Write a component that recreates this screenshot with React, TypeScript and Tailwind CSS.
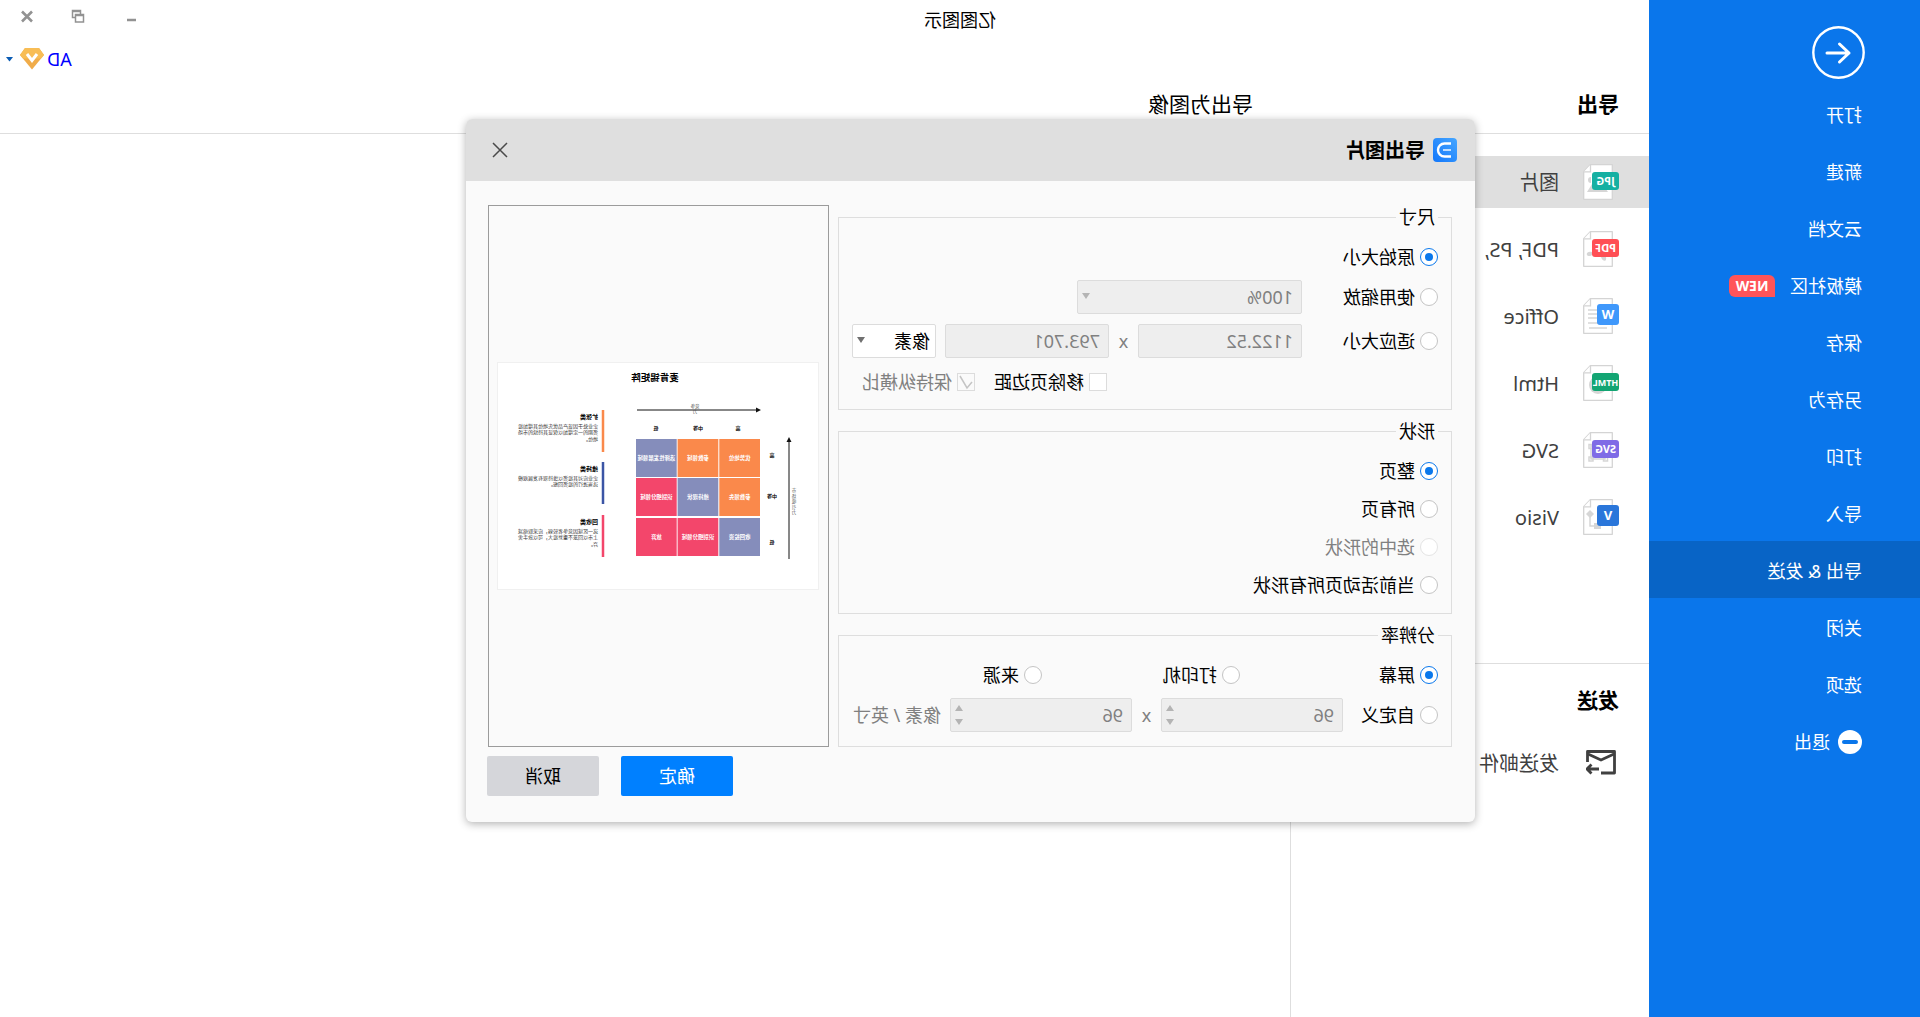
import React from 'react';
import clsx from 'clsx';

const MENU = ['打开', '新建', '云文档', '模板社区', '保存', '另存为', '打印', '导入', '导出 & 发送', '关闭', '选项'];

const FORMATS = [
  { name: '图片', tag: 'JPG', color: '#15b0a2' },
  { name: 'PDF, PS,', tag: 'PDF', color: '#ff4f55' },
  { name: 'Office', tag: 'W', color: '#3f98fb' },
  { name: 'Html', tag: 'HTML', color: '#13a573' },
  { name: 'SVG', tag: 'SVG', color: '#7f6be6' },
  { name: 'Visio', tag: 'V', color: '#2a76da' },
];

const ORANGE = '#fa894b';
const VIOLET = '#858dbb';
const PINK = '#f3466b';

const CELLS = [
  { text: '优势地位', x: 60, y: 77, fill: ORANGE },
  { text: '参数领域', x: 101.7, y: 77, fill: ORANGE },
  { text: '选择性发展领域', x: 143.3, y: 77, fill: VIOLET },
  { text: '参数领先', x: 60, y: 116, fill: ORANGE },
  { text: '维持现状', x: 101.7, y: 116, fill: VIOLET },
  { text: '识别细分领域', x: 143.3, y: 116, fill: PINK },
  { text: '收回投资', x: 60, y: 156, fill: VIOLET },
  { text: '识别细分领域', x: 101.7, y: 156, fill: PINK },
  { text: '放弃', x: 143.3, y: 156, fill: PINK },
];

const NOTES = [
  {
    title: '扩张类',
    y: 48,
    color: ORANGE,
    lines: ['企业处于因该产品优先地位其增加投', '资期的一定增加以保证其持续的市场', '地位。'],
  },
  { title: '维持类', y: 100, color: '#3b55a5', lines: ['企业应对其投资以维持现有发展规模', '适当进行的投资回报。'] },
  {
    title: '回收类',
    y: 153,
    color: PINK,
    lines: ['这一区域因竞争者较弱，应采取缩减', '上市以回笼不重复投大，可以放手舍', '弃。'],
  },
];

const Glyph = ({ tag }: { tag: string }) => {
  switch (tag) {
    case 'JPG':
      return <path d="M11 28l7-10 5 6 4-4 5 8zM28 13a3 3 0 1 1 0 6z" fill="#d6d6d6" />;
    case 'PDF':
      return <path d="M13 26c3-6 6-4 5 0s-6 6-5 0zM27 21c4-1 6 1 5 3s-5 1-6-1z" fill="#d6d6d6" />;
    case 'W':
      return <path d="M12 12h19M12 16h19M12 20h19M12 25h19M12 30h18" stroke="#d6d6d6" strokeWidth="1.4" />;
    case 'HTML':
      return <circle cx="21" cy="20" r="9" fill="#d6d6d6" />;
    case 'SVG':
      return (
        <path
          d="M14 14h14v13H14zM11.500 25h4v4h-4zM26 25h4v4h-4zM26 12.500h4v4h-4z"
          fill="none"
          stroke="#d6d6d6"
          strokeWidth="1.500"
        />
      );
    default:
      return (
        <>
          <path d="M29 11l4 4-4 4-4-4z M18 24h7v6h-7z" fill="#d6d6d6" />
          <path d="M29 15v12h-8" fill="none" stroke="#d6d6d6" strokeWidth="1.500" />
        </>
      );
  }
};

const FormatIcon = ({ tag, color }: { tag: string; color: string }) => {
  const single = tag.length === 1;
  return (
    <svg width="36" height="36" viewBox="0 0 36 36">
      <path d="M6.700.7h22l6.600 7v27.600H6.700z" fill="#fff" stroke="#d4d4d4" strokeWidth="1.300" strokeLinejoin="round" />
      <Glyph tag={tag} />
      <path d="M28.500.7v7.200h6.800" fill="#fff" stroke="#d4d4d4" strokeWidth="1.300" />
      {single ? (
        <rect y="6" width="22" height="21" rx="3" fill={color} />
      ) : (
        <rect y="8" width="27" height="18" rx="3" fill={color} />
      )}
      <text
        x={single ? 11 : 13.5}
        y="21"
        textAnchor="middle"
        fill="#fff"
        fontWeight="700"
        fontSize={single ? 13 : tag === 'HTML' ? 9 : 11}
      >
        {tag}
      </text>
    </svg>
  );
};

const MailIcon = () => (
  <svg width="30" height="26" viewBox="0 0 30 26" fill="none" stroke="#404040" strokeWidth="2.800">
    <path d="M15 23H1.500V1.500h27V12" strokeLinejoin="round" />
    <path d="M2 4l13 6 13-6" />
    <path d="M17 19h12M24.500 14.500L29 19l-4.500 4.500" />
  </svg>
);

const Caret = ({ className, up }: { className?: string; up?: boolean }) => (
  <svg width="10" height="7" viewBox="0 0 10 7" className={className}>
    <path d={up ? 'M1 7h8L5 1z' : 'M1 0h8L5 6z'} fill="currentColor" />
  </svg>
);

const Radio = ({
  name,
  label,
  checked,
  disabled,
  className,
}: {
  name: string;
  label: string;
  checked?: boolean;
  disabled?: boolean;
  className?: string;
}) => (
  <label className={clsx('flex items-center gap-[5px]', disabled && 'text-[#808080]', className)}>
    <input
      type="radio"
      name={name}
      defaultChecked={checked}
      disabled={disabled}
      className="grid size-[18px] shrink-0 appearance-none place-items-center rounded-full border border-[#c4c4c4] bg-white before:size-2 before:rounded-full checked:border-[#0a78ec] checked:before:bg-[#0a78ec] disabled:border-[#e4e4e4]"
    />
    {label}
  </label>
);

const Check = ({ label, checked, disabled }: { label: string; checked?: boolean; disabled?: boolean }) => (
  <label className={clsx('relative flex items-center gap-[5px]', disabled && 'text-[#808080]')}>
    <input
      type="checkbox"
      defaultChecked={checked}
      disabled={disabled}
      className="size-[18px] shrink-0 appearance-none border border-[#dcdcdc] bg-white disabled:bg-[#fafafa]"
    />
    {checked && (
      <svg width="18" height="18" viewBox="0 0 18 18" className="absolute left-0">
        <path d="M3 9l5 6 7-12" fill="none" stroke="#c4c4c4" strokeWidth="1.500" />
      </svg>
    )}
    {label}
  </label>
);

const Field = ({ label, value, className }: { label: string; value: string; className: string }) => (
  <input
    type="text"
    aria-label={label}
    defaultValue={value}
    disabled
    className={clsx('h-[34px] rounded-xs border border-[#dcdcdc] bg-[#eeeeee] px-2 text-[#808080]', className)}
  />
);

const Spinner = ({ label }: { label: string }) => (
  <div className="relative">
    <Field label={label} value="96" className="w-[182px]" />
    <div className="absolute top-0 right-1 flex h-full flex-col items-center justify-center gap-2 text-[#b4b4b4]">
      <Caret up />
      <Caret />
    </div>
  </div>
);

const Select = ({
  label,
  value,
  disabled,
  className,
}: {
  label: string;
  value: string;
  disabled?: boolean;
  className: string;
}) => (
  <div className={clsx('relative', className)}>
    <select
      aria-label={label}
      disabled={disabled}
      className="h-[34px] w-full appearance-none rounded-xs border border-[#dcdcdc] bg-white px-[5px] opacity-100 disabled:bg-[#eeeeee] disabled:px-2 disabled:text-[#808080]"
    >
      <option>{value}</option>
    </select>
    <Caret className={clsx('absolute top-[13px] right-1', disabled ? 'text-[#b4b4b4]' : 'text-[#707070]')} />
  </div>
);

const Group = ({ title, className, children }: { title: string; className: string; children: React.ReactNode }) => (
  <fieldset className={clsx('w-[614px] border border-[#dedede] pl-[13px] leading-6', className)}>
    <legend className="px-[3px]">{title}</legend>
    {children}
  </fieldset>
);

const Preview = () => (
  <svg width="322" height="228" viewBox="2 1 320 226" textAnchor="middle" className="border border-[#f0f0f0] bg-white">
    <text x="165" y="19" fontSize="9.500" fontWeight="700">
      麦肯锡矩阵
    </text>
    <path d="M183 48H61M31 197V78" stroke="#111" />
    <path d="M59 48l5-2.500v5zM31 75l2.500 5h-5z" fill="#111" />
    <g fontSize="4.500" fill="#555">
      <text x="125" y="46">
        竞争
      </text>
      <text x="125" y="51">
        力
      </text>
      {'市场吸引力'.split('').map((c, i) => (
        <text key={c} x="26" y={130 + i * 5.5}>
          {c}
        </text>
      ))}
    </g>
    <g fontSize="5" fontWeight="700">
      <text x="82" y="68">
        高
      </text>
      <text x="122" y="68">
        中等
      </text>
      <text x="164" y="68">
        低
      </text>
      <text x="48" y="95">
        高
      </text>
      <text x="48" y="136">
        中等
      </text>
      <text x="48" y="182">
        低
      </text>
    </g>
    {CELLS.map(({ text, x, y, fill }) => (
      <g key={`${x}-${y}`}>
        <rect x={x} y={y} width="40.700" height="38" fill={fill} />
        <text x={x + 20.3} y={y + 21} fill="#fff" fontSize="5.400" fontWeight="700">
          {text}
        </text>
      </g>
    ))}
    <g textAnchor="start">
      {NOTES.map(({ title, y, color, lines }) => (
        <g key={title}>
          <path d={`M217 ${y}v42`} stroke={color} strokeWidth="2.500" />
          <text x="222" y={y + 9} fontSize="6" fontWeight="700">
            {title}
          </text>
          {lines.map((line, i) => (
            <text key={line} x="222" y={y + 18 + i * 6.3} fontSize="5" fill="#333">
              {line}
            </text>
          ))}
        </g>
      ))}
    </g>
  </svg>
);

const Sidebar = () => (
  <nav className="flex w-[271px] shrink-0 flex-col bg-[#0a76eb] text-white">
    <button aria-label="返回" className="mt-[26px] mb-[6px] ml-[55px] size-[53px]">
      <svg viewBox="0 0 53 53" fill="none" stroke="currentColor" strokeLinecap="round" strokeLinejoin="round">
        <circle cx="26.500" cy="26.500" r="25.200" strokeWidth="2.400" />
        <path d="M38 27H16M25.500 18L16 27l9.500 9" strokeWidth="3" />
      </svg>
    </button>
    {MENU.map((item) => (
      <a
        key={item}
        href="#"
        className={clsx('flex h-[57px] items-center gap-[15px] pt-0.5 pl-[58px]', item === '导出 & 发送' && 'bg-[#0864c6]')}
      >
        {item}
        {item === '模板社区' && (
          <span className="flex h-[22px] w-[46px] items-center justify-center rounded-md rounded-bl-none bg-[#ff5459] text-sm font-bold">
            NEW
          </span>
        )}
      </a>
    ))}
    <a href="#" className="flex h-[57px] items-center gap-2 pt-0.5 pl-[58px]">
      <svg width="24" height="24" viewBox="0 0 24 24">
        <circle cx="12" cy="12" r="12" fill="#fff" />
        <path d="M6 12h12" stroke="#0a76eb" strokeWidth="4" strokeLinecap="round" />
      </svg>
      退出
    </a>
  </nav>
);

const TitleBar = () => (
  <>
    <header className="relative flex h-10 items-center justify-center pr-[271px]">
      <h1>亿图图示</h1>
      <div className="absolute top-2 right-5 flex gap-[37px] text-[#929292]">
        <button aria-label="最小化">
          <svg width="14" height="16" viewBox="0 0 14 16">
            <path d="M0 12h9" stroke="currentColor" strokeWidth="2.500" />
          </svg>
        </button>
        <button aria-label="还原">
          <svg width="14" height="16" viewBox="0 0 14 16" fill="none" stroke="currentColor" strokeWidth="1.500">
            <path d="M4.500 6V2.500h8v7H9M1.500 6.500h8v7.500h-8z" />
            <path d="M4.500 3.200h8M1.500 7.200h8" strokeWidth="2" />
          </svg>
        </button>
        <button aria-label="关闭">
          <svg width="14" height="16" viewBox="0 0 14 16">
            <path d="M2 3.500l10 10M12 3.500l-10 10" stroke="currentColor" strokeWidth="2.600" />
          </svg>
        </button>
      </div>
    </header>
    <div className="flex h-[38px] justify-end pr-[6px]">
      <button className="flex items-center text-[#0000ff]">
        AD
        <svg width="24" height="22" viewBox="0 0 24 22" className="mr-[7px] ml-[3px]">
          <path d="M5 0h14l5 7-12 14.500L0 7z" fill="#f0ac4a" />
          <path d="M5 0h14l5 7-3 3.500H3L0 7z" fill="#f8bd55" />
          <path d="M7 6l5 6.500L17 6" fill="none" stroke="#fff" strokeWidth="3" />
        </svg>
        <svg width="7" height="5" viewBox="0 0 7 5">
          <path d="M0 0h7L3.500 4.500z" fill="#0a5cb4" />
        </svg>
      </button>
    </div>
  </>
);

const ExportDialog = () => (
  <div
    role="dialog"
    aria-label="导出图片"
    className="absolute top-[119px] left-[445px] w-[1009px] overflow-hidden rounded-md bg-[#fafafa] shadow-[0_2px_8px_rgba(0,0,0,0.3)]"
  >
    <div className="flex h-[62px] items-center gap-2 bg-[#dfdfdf] pr-[26px] pl-[18px]">
      <svg width="24" height="24" viewBox="0 0 24 24" fill="none" stroke="#fff">
        <defs>
          <linearGradient id="logo" x1="0" y1="0" x2="1" y2="1">
            <stop offset="0" stopColor="#46a6ff" />
            <stop offset="1" stopColor="#1277fb" />
          </linearGradient>
        </defs>
        <rect width="24" height="24" rx="4" fill="url(#logo)" stroke="none" />
        <path d="M6 5.500h6.500a6.500 6.500 0 0 1 0 13H6" strokeWidth="2.400" />
        <path d="M6 12h8" strokeWidth="2" opacity="0.700" />
      </svg>
      <h2 className="flex-1 pt-0.5 text-xl font-bold">导出图片</h2>
      <button aria-label="关闭">
        <svg width="16" height="16" viewBox="0 0 16 16">
          <path d="M1 1l14 14M15 1L1 15" stroke="#4a4a4a" strokeWidth="1.500" />
        </svg>
      </button>
    </div>
    <div className="pt-6 pr-[21px] pb-[26px] pl-[23px]">
      <div className="flex gap-[9px]">
        <div className="flex flex-col gap-[9px]">
          <Group title="尺寸" className="h-[205px]">
            <Radio name="size" label="原始大小" checked className="mt-[15px] h-[26px]" />
            <div className="mt-[10px] flex">
              <Radio name="size" label="使用缩放" className="w-[136px]" />
              <Select label="缩放" value="100%" disabled className="w-[225px]" />
            </div>
            <div className="mt-[10px] flex items-center">
              <Radio name="size" label="适应大小" className="w-[136px]" />
              <Field label="宽" value="1122.52" className="w-[164px]" />
              <span className="w-[29px] text-center text-[#808080]">x</span>
              <Field label="高" value="793.701" className="w-[164px]" />
              <Select label="单位" value="像素" className="ml-[9px] w-[84px]" />
            </div>
            <div className="mt-3 ml-[331px] flex gap-[19px]">
              <Check label="移除页边距" />
              <Check label="保持纵横比" checked disabled />
            </div>
          </Group>
          <Group title="形状" className="h-[195px]">
            <div className="mt-[15px] flex flex-col gap-3">
              <Radio name="shape" label="整页" checked className="h-[26px]" />
              <Radio name="shape" label="所有页" className="h-[26px]" />
              <Radio name="shape" label="选中的形状" disabled className="h-[26px]" />
              <Radio name="shape" label="当前活动页所有形状" className="h-[26px]" />
            </div>
          </Group>
          <Group title="分辨率" className="h-[124px]">
            <div className="mt-[15px] flex h-[26px]">
              <Radio name="dpi" label="屏幕" checked className="w-[198px]" />
              <Radio name="dpi" label="打印机" className="w-[198px]" />
              <Radio name="dpi" label="来源" />
            </div>
            <div className="mt-[10px] flex items-center">
              <Radio name="dpi" label="自定义" className="w-[95px]" />
              <Spinner label="水平" />
              <span className="w-[29px] text-center text-[#808080]">x</span>
              <Spinner label="垂直" />
              <span className="ml-[9px] text-[#808080]">像素 / 英寸</span>
            </div>
          </Group>
        </div>
        <div className="flex w-[341px] items-center justify-center border border-[#9b9b9b]">
          <Preview />
        </div>
      </div>
      <div className="mt-[9px] flex justify-end gap-[22px]">
        <button className="h-10 w-28 rounded-xs bg-[#0080ff] text-white">确定</button>
        <button className="h-10 w-28 rounded-xs bg-[#d5d6da]">取消</button>
      </div>
    </div>
  </div>
);

export default function App() {
  return (
    <div className="relative flex min-h-screen -scale-x-100 bg-white font-['Noto_Sans','Noto_Sans_CJK_SC',sans-serif] text-lg text-black">
      <Sidebar />
      <main className="flex flex-1 flex-col">
        <TitleBar />
        <div className="flex h-14 items-center border-b border-[#dedede] pb-0.5 text-[21px]">
          <h2 className="w-[359px] pl-[30px] font-bold">导出</h2>
          <h2 className="pl-[37px]">导出为图像</h2>
        </div>
        <aside className="w-[359px] flex-1 border-r border-[#dedede] pt-[22px] text-xl text-[#404040]">
          <ul className="flex flex-col gap-[15px] pb-[120px]">
            {FORMATS.map(({ name, tag, color }) => (
              <li key={name}>
                <a
                  href="#"
                  className={clsx('flex h-[52px] items-center gap-6 pl-[30px]', tag === 'JPG' && 'bg-[#dfdfdf]')}
                >
                  <FormatIcon tag={tag} color={color} />
                  <span className="pt-0.5">{name}</span>
                </a>
              </li>
            ))}
          </ul>
          <h2 className="flex h-[74px] items-center border-t border-[#dedede] pl-[30px] text-[21px] font-bold text-black">
            发送
          </h2>
          <a href="#" className="flex h-[52px] items-center gap-[27px] pl-[33px]">
            <MailIcon />
            <span className="pt-0.5">发送邮件</span>
          </a>
        </aside>
      </main>
      <ExportDialog />
    </div>
  );
}
